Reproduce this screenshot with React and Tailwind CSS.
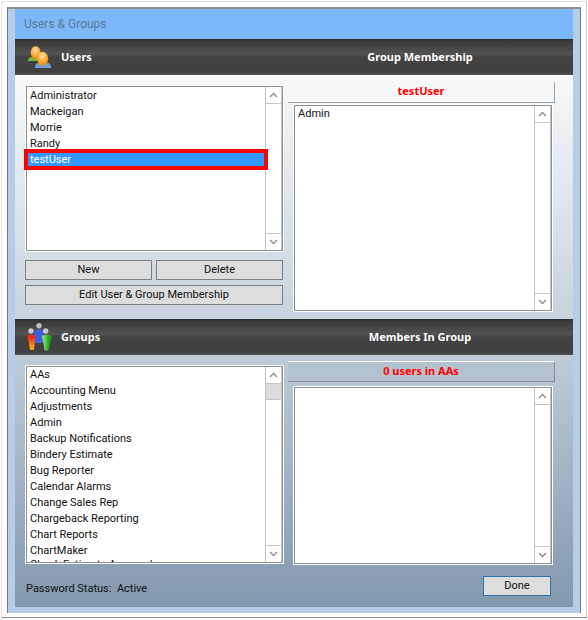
import React from 'react';

const users = ['Administrator', 'Mackeigan', 'Morrie', 'Randy', 'testUser'];
const groups = [
  'AAs',
  'Accounting Menu',
  'Adjustments',
  'Admin',
  'Backup Notifications',
  'Bindery Estimate',
  'Bug Reporter',
  'Calendar Alarms',
  'Change Sales Rep',
  'Chargeback Reporting',
  'Chart Reports',
  'ChartMaker',
  'Check Estimate Approvals',
];

function Arrow({ up }) {
  return (
    <div className={`h-[17px] shrink-0 flex items-center justify-center bg-white border-[#c4c4c4] ${up ? 'border-b' : 'border-t'}`}>
      <svg width="9" height="6" viewBox="0 0 9 6" fill="none" stroke="#8a8a8a" strokeWidth="1.3">
        <path d={up ? 'M1 5l3.5-3.5L8 5' : 'M1 1l3.5 3.5L8 1'} />
      </svg>
    </div>
  );
}

function Scrollbar({ thumb }) {
  return (
    <div className="w-[17px] shrink-0 flex flex-col bg-white border-x border-[#c4c4c4]">
      <Arrow up />
      {thumb && <div className="h-4 shrink-0 bg-[#dcdcdc] border-b border-[#c4c4c4]" />}
      <div className="flex-1" />
      <Arrow />
    </div>
  );
}

function ListBox({ items, selected, thumb, className }) {
  return (
    <div className={`flex bg-white border border-white outline outline-1 -outline-offset-2 outline-[#8f8f8f] p-px ${className}`}>
      <div className="flex-1 min-w-0 overflow-hidden">
        {items.map((item) => (
          <div
            key={item}
            className={`h-4 leading-4 pl-[3px] whitespace-nowrap ${item === selected ? 'bg-[#3399ff] text-white' : 'text-[#111]'}`}
          >
            {item}
          </div>
        ))}
      </div>
      <Scrollbar thumb={thumb} />
    </div>
  );
}

function Button({ children, className }) {
  return (
    <button className={`h-5 bg-[#dddddd] border border-[#7f7f7f] text-[#111] ${className}`}>
      {children}
    </button>
  );
}

function SectionBar({ icon, left, right }) {
  return (
    <div
      className="h-9 flex items-center text-white font-bold bg-[linear-gradient(#2a2a2a_0,#3a3a3a_6%,#535353_42%,#424242_50%,#404040_90%,#505050_100%)]"
      style={{ fontFamily: '"Noto Sans", sans-serif' }}
    >
      <div className="w-[46px] pl-[12px] flex">{icon}</div>
      <div className="w-[260px]">{left}</div>
      <div className="w-[198px] text-center">{right}</div>
    </div>
  );
}

function UsersIcon() {
  return (
    <svg width="24" height="23" viewBox="0 0 24 23" className="ml-px">
      <defs>
        <radialGradient id="ug" cx="0.45" cy="0.3" r="0.75">
          <stop offset="0" stopColor="#ffe0a8" />
          <stop offset="0.6" stopColor="#f9a52e" />
          <stop offset="1" stopColor="#ec8410" />
        </radialGradient>
      </defs>
      <path d="M0 15q0-4 4-4h6v4z" fill="#6cb33f" />
      <ellipse cx="7.7" cy="6.7" rx="5" ry="6.5" fill="url(#ug)" />
      <path d="M7 22q0-5 4-5.500h8q4 .5 4 5.500z" fill="#6f9fd8" />
      <ellipse cx="14.700" cy="12.700" rx="5.500" ry="7" fill="url(#ug)" />
    </svg>
  );
}

function GroupsIcon() {
  return (
    <svg width="25" height="28" viewBox="0 0 25 28">
      <defs>
        <linearGradient id="rg" x1="0" y1="0" x2="0" y2="1">
          <stop offset="0.2" stopColor="#ee2a1c" />
          <stop offset="0.75" stopColor="#f59a12" />
        </linearGradient>
        <linearGradient id="gg" x1="0" y1="0" x2="1" y2="0">
          <stop offset="0.2" stopColor="#7fe06a" />
          <stop offset="0.7" stopColor="#1fa81c" />
        </linearGradient>
      </defs>
      <circle cx="12" cy="2.700" r="2.700" fill="#bdbdbd" />
      <path d="M7.500 8q4.500-3.500 9 0v12h-9z" fill="#3f5fe8" />
      <circle cx="4" cy="8" r="2.700" fill="#c9c9c9" />
      <path d="M0 13q4-3 8.700 0l-1 6-.7 8H3l-1.300-8z" fill="url(#rg)" />
      <circle cx="18.700" cy="8" r="2.700" fill="#c9c9c9" />
      <path d="M14.700 13q5-3 10 0l-1.700 7-1.500 7.500h-4l-1-7.500z" fill="url(#gg)" />
    </svg>
  );
}

export default function App() {
  return (
    <div className="w-[588px] h-[620px] bg-white pt-[1px] pl-[1px] text-[11px]" style={{ fontFamily: 'Roboto, sans-serif' }}>
      {/* screenshot frame */}
      <div className="w-[586px] h-[617px] p-[5px] bg-white border border-[#e4e4e4] border-b-[#8a8a8a] border-r-[#c8c8c8]">
        <div className="h-[606px] flex flex-col border-t-2 border-x border-t-[#8f8f8f] border-x-[#707a86] bg-[#b5cde6] px-[7px]">
          <div className="h-[30px] shrink-0 flex items-center pl-[9px] bg-[#7ab8f8] text-[#5b7a9a] text-xs">Users &amp; Groups</div>
          <div className="h-[568px] bg-gradient-to-b from-[#ffffff] via-[#c6d2dd] to-[#8399af]">
            <SectionBar icon={<UsersIcon />} left="Users" right="Group Membership" />

            <div className="h-[244px] flex pl-[10px] pr-[18px]">
              <div className="relative w-[259px] pt-[10px]">
                <ListBox items={users} selected="testUser" className="h-[167px] [&>div:first-child]:pt-px" />
                {/* red annotation box */}
                <div className="absolute left-[-1px] top-[74px] w-[244px] h-[21px] border-4 border-[#ff0000]" />
                <div className="w-[258px] flex gap-1 mt-2">
                  <Button className="flex-1">New</Button>
                  <Button className="flex-1">Delete</Button>
                </div>
                <Button className="w-[258px] mt-[5px]">Edit User &amp; Group Membership</Button>
              </div>
              <div className="w-[267px] ml-[4px] pt-[7px]">
                <div className="h-[21px] pb-px flex items-center justify-center font-bold text-[#ff0000] bg-[#f5f7f9] border-r border-b border-[#a0a0a0]" style={{ fontFamily: '"Noto Sans", sans-serif' }}>testUser</div>
                <ListBox items={['Admin']} className="h-[208px] w-[260px] mt-[1px] ml-[5px]" />
              </div>
            </div>

            <SectionBar icon={<GroupsIcon />} left="Groups" right="Members In Group" />

            <div className="flex pl-[10px] pr-[18px] pt-[10px]">
              {/* last row is clipped by the box, only its ascenders show */}
              <ListBox items={groups} thumb className="w-[259px] h-[199px] [&>div:first-child>div:last-child]:-mt-[2px]" />
              <div className="w-[267px] ml-[4px] -mt-[4px]">
                <div className="h-[21px] flex items-center justify-center font-bold text-[#ff0000] bg-[#b4c2d0] border-t border-t-white border-r border-b border-r-[#8f8f8f] border-b-[#8f8f8f]" style={{ fontFamily: '"Noto Sans", sans-serif' }}>0 users in AAs</div>
                <ListBox items={[]} className="h-[179px] w-[260px] mt-1 ml-[5px]" />
              </div>
            </div>

            <div className="flex items-center justify-between pl-[11px] pr-[22px] mt-[10px]">
              <div className="text-[#111] pt-[6px]">Password Status:&nbsp; Active</div>
              <button className="w-[68px] h-5 bg-[#dddddd] border border-[#2f74ad] text-[#111]">Done</button>
            </div>
          </div>
        </div>
      </div>
    </div>
  );
}
